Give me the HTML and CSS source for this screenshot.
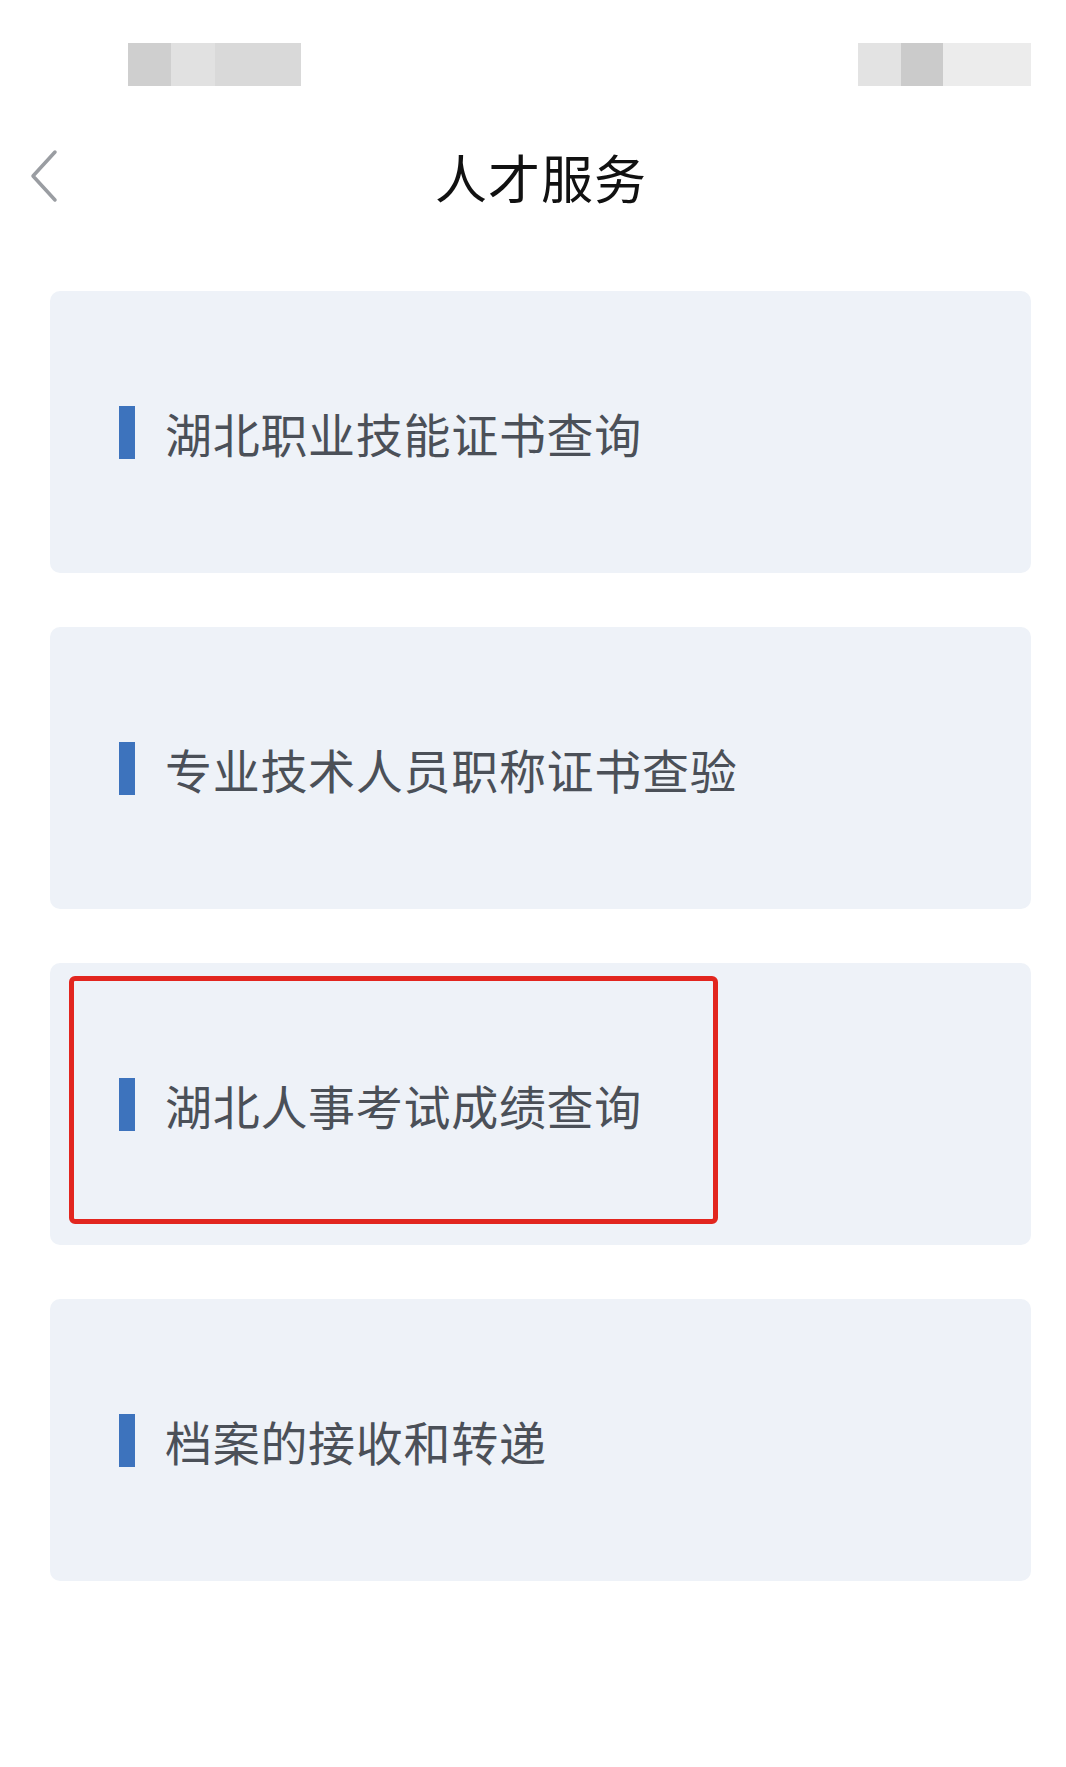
FILE: index.html
```html
<!DOCTYPE html>
<html lang="zh-CN">
<head>
<meta charset="utf-8">
<title>人才服务</title>
<link rel="stylesheet" href="styles.css">
</head>
<body>
<div class="page">
  <div class="status">
    <div class="blur blur-left"><span></span><span></span><span></span></div>
    <div class="blur blur-right"><span></span><span></span><span></span></div>
  </div>
  <div class="nav">
    <svg class="back" width="32" height="54" viewBox="0 0 32 54"><polyline points="27,3 5,27 27,51" fill="none" stroke="#9a9da2" stroke-width="3.5" stroke-linecap="round" stroke-linejoin="round"/></svg>
    <div class="title">人才服务</div>
  </div>
  <div class="list">
    <div class="card"><i class="bar"></i><span class="label">湖北职业技能证书查询</span></div>
    <div class="card"><i class="bar"></i><span class="label">专业技术人员职称证书查验</span></div>
    <div class="card highlight"><i class="bar"></i><span class="label">湖北人事考试成绩查询</span><div class="mark"></div></div>
    <div class="card"><i class="bar"></i><span class="label">档案的接收和转递</span></div>
  </div>
</div>
</body>
</html>
```
FILE: styles.css
```css
html, body {
  margin: 0;
  padding: 0;
  background: #ffffff;
}
.page {
  width: 1066px;
  min-height: 1767px;
  font-family: "Noto Sans CJK SC", "Noto Sans", sans-serif;
}
.status {
  display: flex;
  justify-content: space-between;
  padding: 43px 35px 0 128px;
  height: 43px;
}
.blur {
  display: flex;
  width: 173px;
  height: 43px;
}
.blur span { flex: 1; }
.blur-left span:nth-child(1) { background: #cfcfcf; flex: 0 0 43px; }
.blur-left span:nth-child(2) { background: #e1e1e1; flex: 0 0 44px; }
.blur-left span:nth-child(3) { background: #d9d9d9; }
.blur-right span:nth-child(1) { background: #e3e3e3; flex: 0 0 43px; }
.blur-right span:nth-child(2) { background: #cbcbcb; flex: 0 0 42px; }
.blur-right span:nth-child(3) { background: #ececec; }
.nav {
  position: relative;
  height: 100px;
  margin-top: 41px;
  display: flex;
  align-items: center;
  justify-content: center;
}
.back {
  position: absolute;
  left: 28px;
  top: 22px;
}
.title {
  font-size: 52px;
  color: #111111;
  letter-spacing: 1px;
  line-height: 1;
  margin-left: 16px;
}
.list {
  display: flex;
  flex-direction: column;
  gap: 54px;
  padding: 64px 35px 0 50px;
}
.card {
  position: relative;
  height: 282px;
  background: #eef2f8;
  border-radius: 10px;
  display: flex;
  align-items: center;
  padding-left: 69px;
  box-sizing: border-box;
}
.bar {
  display: block;
  width: 16px;
  height: 53px;
  background: #3d73bd;
  margin-right: 30px;
}
.label {
  font-size: 47px;
  color: #4b5058;
  line-height: 1;
  letter-spacing: 0.7px;
}
.mark {
  position: absolute;
  left: 19px;
  top: 13px;
  width: 649px;
  height: 248px;
  box-sizing: border-box;
  border: 5px solid #e2261f;
  border-radius: 6px;
}
```
